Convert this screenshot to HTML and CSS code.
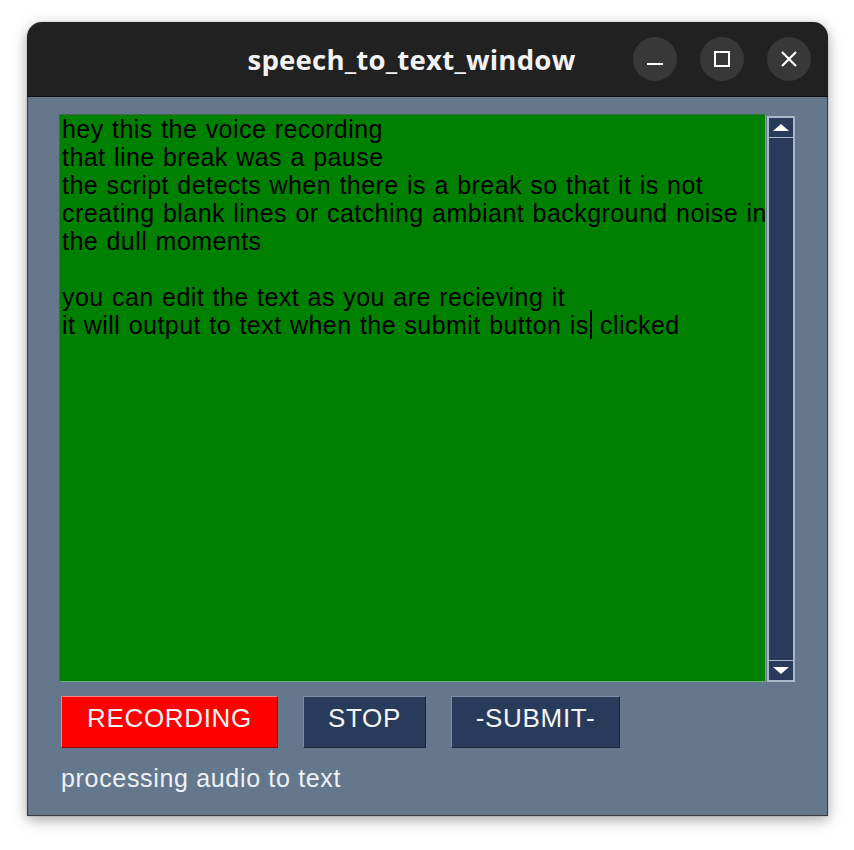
FILE: index.html
```html
<!DOCTYPE html>
<html>
<head>
<meta charset="utf-8">
<link rel="stylesheet" href="styles.css">
</head>
<body>
<div class="window">
  <div class="titlebar">
    <div class="title">speech_to_text_window</div>
    <div class="controls">
      <div class="ctl"><svg width="16" height="16" viewBox="0 0 16 16"><line x1="0" y1="13" x2="16" y2="13" stroke="#fff" stroke-width="2"/></svg></div>
      <div class="ctl"><svg width="16" height="16" viewBox="0 0 16 16"><rect x="1" y="1" width="14" height="14" fill="none" stroke="#fff" stroke-width="2"/></svg></div>
      <div class="ctl"><svg width="16" height="16" viewBox="0 0 16 16"><path d="M1 1 L15 15 M15 1 L1 15" stroke="#fff" stroke-width="2.2"/></svg></div>
    </div>
  </div>
  <div class="content">
    <div class="editor">
      <div class="textarea">hey this the voice recording
that line break was a pause
the script detects when there is a break so that it is not
creating blank lines or catching ambiant background noise in
the dull moments

you can edit the text as you are recieving it
it will output to text when the submit button <span class="at-caret">is</span> clicked</div>
      <div class="scrollbar">
        <div class="arrow up"><span class="tri-up"></span></div>
        <div class="trough"></div>
        <div class="arrow down"><span class="tri-down"></span></div>
      </div>
    </div>
    <div class="buttons">
      <div class="btn rec">RECORDING</div>
      <div class="btn stop">STOP</div>
      <div class="btn submit">-SUBMIT-</div>
    </div>
    <div class="status">processing audio to text</div>
  </div>
</div>
</body>
</html>
```
FILE: styles.css
```css
html, body {
  margin: 0;
  padding: 0;
  background: #ffffff;
}
body {
  padding: 22px 0 0 27px;
  height: 850px;
  box-sizing: border-box;
}
.window {
  width: 801px;
  border-radius: 15px 15px 0 0;
  box-shadow: 0 4px 14px rgba(0,0,0,0.35), 0 0 1px rgba(0,0,0,0.5);
  overflow: hidden;
}
.titlebar {
  height: 74px;
  background: #212121;
  border-bottom: 1px solid #0e0e0e;
  display: flex;
  align-items: center;
}
.title {
  flex: 1;
  padding-left: 163px;
  text-align: center;
  color: #f2f2f2;
  font-family: "Open Sans", "DejaVu Sans", sans-serif;
  font-weight: 700;
  font-size: 27.6px;
  letter-spacing: 0.2px;
  padding-bottom: 1px;
}
.controls {
  display: flex;
  gap: 23px;
  padding-right: 17px;
}
.ctl {
  width: 44px;
  height: 44px;
  border-radius: 50%;
  background: #383838;
  display: flex;
  align-items: center;
  justify-content: center;
}
.content {
  background: #64778d;
  border: 1px solid #3a3a3a;
  border-top: none;
  padding: 17px 31px 0 31px;
  height: 719px;
  box-sizing: border-box;
  font-family: "Liberation Sans", Arial, sans-serif;
  font-size: 25px;
  letter-spacing: 0.67px;
}
.editor {
  display: flex;
  gap: 1px;
  height: 568px;
}
.textarea {
  width: 707px;
  box-sizing: border-box;
  background: #008000;
  border: 1px solid #3f6a4a;
  border-right-color: #6fb06f;
  border-bottom-color: #6fb06f;
  padding: 0 2px 2px 2px;
  color: #000;
  line-height: 28px;
  letter-spacing: 0.45px;
  word-spacing: 1px;
  white-space: pre;
  overflow: hidden;
}
.at-caret {
  position: relative;
  padding-right: 3px;
}
.at-caret::after {
  content: "";
  position: absolute;
  right: 0;
  top: -1px;
  width: 2px;
  height: 29px;
  background: #000;
}
.scrollbar {
  width: 28px;
  margin-top: 2px;
  box-sizing: border-box;
  border: 2px solid #a9b8c8;
  display: flex;
  flex-direction: column;
  background: #a9b8c8;
}
.arrow {
  height: 19px;
  background: #283b5b;
  display: flex;
  align-items: center;
  justify-content: center;
}
.arrow.up { margin-bottom: 1px; }
.arrow.down { margin-top: 1px; }
.trough {
  flex: 1;
  background: #283b5b;
}
.tri-up {
  width: 0; height: 0;
  border-left: 8px solid transparent;
  border-right: 8px solid transparent;
  border-bottom: 7px solid #fff;
}
.tri-down {
  width: 0; height: 0;
  border-left: 8px solid transparent;
  border-right: 8px solid transparent;
  border-top: 7px solid #fff;
}
.buttons {
  display: flex;
  gap: 25px;
  margin: 14px 0 0 2px;
}
.btn {
  height: 52px;
  box-sizing: border-box;
  display: flex;
  align-items: center;
  justify-content: center;
  color: #f4f4f4;
  border: 1px solid;
  font-size: 26px;
  padding-bottom: 7px;
}
.rec {
  width: 217px;
  background: #ff0000;
  border-color: #ff8080 #a00000 #a00000 #ff8080;
}
.stop, .submit {
  background: #283b5b;
  border-color: #7d8ea3 #1a2638 #1a2638 #7d8ea3;
}
.stop { width: 123px; }
.submit { width: 169px; }
.status {
  margin: 16px 0 0 2px;
  line-height: 28px;
  color: #eef2f6;
}
```
